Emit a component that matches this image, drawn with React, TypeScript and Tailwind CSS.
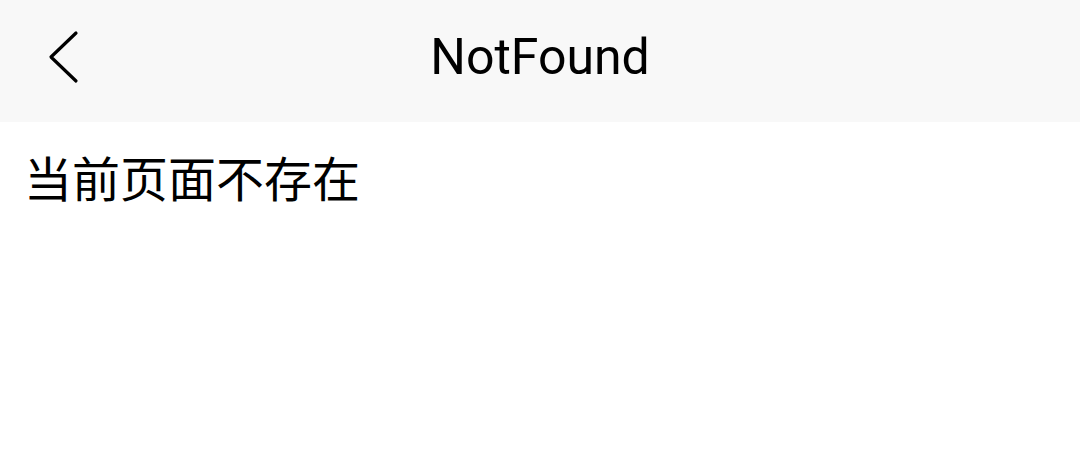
import React from 'react';

export default function App() {
  return (
    <div className="w-[1080px] h-[463px] bg-white font-['Roboto','Noto_Sans_CJK_SC',sans-serif] text-black">
      {/* Header */}
      <div className="relative h-[122px] bg-[#f8f8f8] flex items-center justify-center">
        <button className="absolute left-[40px] top-[25px] w-[48px] h-[64px] flex items-center justify-center">
          <svg width="34" height="54" viewBox="0 0 34 54" fill="none">
            <path d="M29 6 L4 30 L29 54" transform="translate(0 -3)" stroke="#000" strokeWidth="3.2" strokeLinecap="round" strokeLinejoin="round" />
          </svg>
        </button>
        <h1 className="text-[50px] leading-none font-normal -mt-[9px]">NotFound</h1>
      </div>

      {/* Body */}
      <div className="px-[24px] pt-[26px]">
        <p className="text-[48px] leading-[56px] font-['Noto_Sans_CJK_SC',sans-serif]">当前页面不存在</p>
      </div>
    </div>
  );
}
